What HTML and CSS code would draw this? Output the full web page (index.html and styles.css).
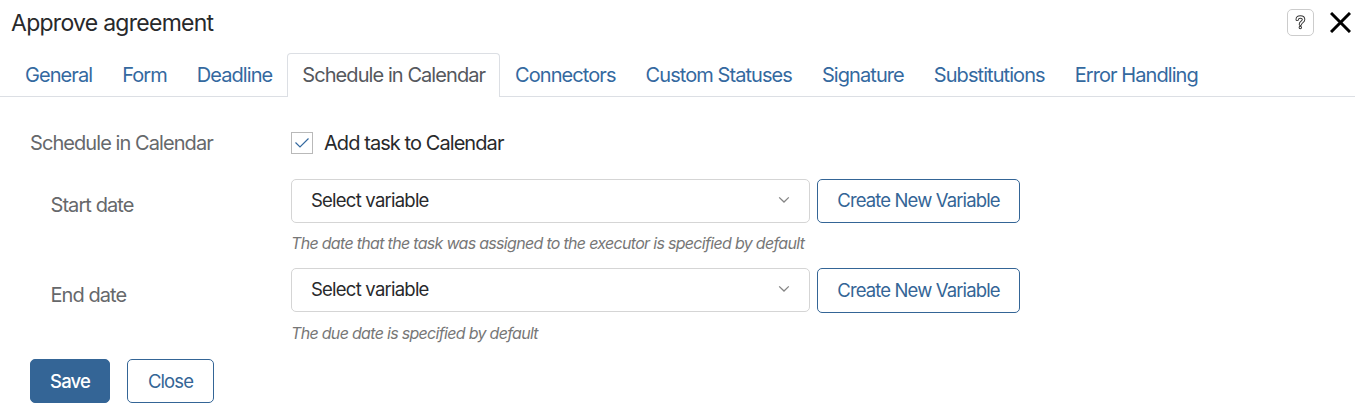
FILE: index.html
```html
<!DOCTYPE html>
<html lang="en">
<head>
<meta charset="utf-8">
<title>Approve agreement</title>
<link rel="stylesheet" href="styles.css">
</head>
<body>
<header class="header">
  <h1 class="title">Approve agreement</h1>
  <div class="header-actions">
    <button class="help" aria-label="Help">
      <svg width="11" height="15" viewBox="0 0 11 15" fill="none" stroke-linecap="round" stroke-linejoin="round"><path class="help-outline" d="M2.2 4.4C2.2 2.6 3.6 2 5.3 2C7.2 2 8.6 2.9 8.6 4.6C8.6 6.9 5.4 6.7 5.4 9.2M5.3 12.4V12.5"/><path class="help-core" d="M2.2 4.4C2.2 2.6 3.6 2 5.3 2C7.2 2 8.6 2.9 8.6 4.6C8.6 6.9 5.4 6.7 5.4 9.2M5.3 12.4V12.5"/></svg>
    </button>
    <button class="dismiss" aria-label="Close window">
      <svg width="21" height="21" viewBox="0 0 21 21" fill="none" stroke="#000" stroke-width="3"><path d="M1 1L20 20M20 1L1 20"/></svg>
    </button>
  </div>
</header>
<nav class="tabs">
  <a class="tab">General</a>
  <a class="tab">Form</a>
  <a class="tab">Deadline</a>
  <a class="tab tab-active">Schedule in Calendar</a>
  <a class="tab">Connectors</a>
  <a class="tab">Custom Statuses</a>
  <a class="tab">Signature</a>
  <a class="tab">Substitutions</a>
  <a class="tab">Error Handling</a>
</nav>
<main class="form">
  <div class="row row-check">
    <span class="label">Schedule in Calendar</span>
    <span class="check"><svg class="box" width="22" height="22" viewBox="0 0 22 22" fill="none"><rect x=".5" y=".5" width="21" height="21" stroke="#b9b9b9"/><path d="M4.500 10.500L9 15L17.500 6.500" stroke="#34699f" stroke-width="1.200"/></svg><span class="check-text">Add task to Calendar</span></span>
  </div>
  <div class="row row-start">
    <span class="label label-sub">Start date</span>
    <div class="field">
      <div class="controls">
        <div class="select"><span>Select variable</span><svg width="12" height="8" viewBox="0 0 12 8" fill="none" stroke="#858585" stroke-width="1.300"><path d="M1.200 1.400L6 6L10.800 1.400"/></svg></div>
        <button class="btn btn-create">Create New Variable</button>
      </div>
      <p class="hint">The date that the task was assigned to the executor is specified by default</p>
    </div>
  </div>
  <div class="row row-end">
    <span class="label label-sub">End date</span>
    <div class="field">
      <div class="controls">
        <div class="select"><span>Select variable</span><svg width="12" height="8" viewBox="0 0 12 8" fill="none" stroke="#858585" stroke-width="1.300"><path d="M1.200 1.400L6 6L10.800 1.400"/></svg></div>
        <button class="btn btn-create">Create New Variable</button>
      </div>
      <p class="hint">The due date is specified by default</p>
    </div>
  </div>
  <footer class="footer">
    <button class="btn btn-save">Save</button>
    <button class="btn btn-close">Close</button>
  </footer>
</main>
</body>
</html>
```
FILE: styles.css
```css
* { box-sizing: border-box; }
body { margin: 0; height: 410px; overflow: hidden; background: #fff; color: #28292b; font-family: Inter, "Liberation Sans", sans-serif; font-size: 20px; letter-spacing: -0.93px; }
button { font: inherit; letter-spacing: inherit; margin: 0; padding: 0; background: none; border: 0; white-space: nowrap; }
svg { display: block; flex: none; }
.header { height: 53px; display: flex; justify-content: space-between; padding: 9px 4px 0 11px; }
.title { margin: 0; font-size: 23px; font-weight: 400; line-height: 28px; letter-spacing: -0.73px; }
.header-actions { display: flex; gap: 16px; }
.help { width: 27px; height: 27px; border: 1px solid #ccc; border-radius: 5px; display: flex; align-items: center; justify-content: center; }
.help-outline { stroke: #333; stroke-width: 3.4; }
.help-core { stroke: #fff; stroke-width: 1.5; }
.dismiss { padding-top: 3px; height: 27px; display: flex; }
.tabs { height: 44px; display: flex; padding-left: 10px; border-bottom: 1px solid #dcdfe4; }
.tab { height: 44px; padding: 0 14px; border: 1px solid transparent; border-bottom: 0; line-height: 43px; white-space: nowrap; color: #34699f; }
.tab-active { color: #55585d; background: #fff; border-color: #dcdfe4; border-radius: 4px 4px 0 0; }
.form { padding: 35px 30px 0; }
.row { display: flex; }
.row-check { height: 47px; }
.row-start { height: 89px; }
.row-end { height: 91px; }
.label { width: 261px; flex: none; line-height: 22px; color: #66686b; }
.label-sub { padding: 15px 0 0 20.5px; }
.row-end .label-sub { padding-top: 16px; }
.check { display: flex; gap: 11px; line-height: 22px; }
.controls { display: flex; gap: 7px; }
.select { width: 519px; height: 44px; display: flex; align-items: center; justify-content: space-between; padding: 0 19px 2px; border: 1px solid #d5d5d5; border-radius: 5px; font-size: 18.5px; letter-spacing: -0.77px; }
.select svg { margin-top: -1px; }
.btn { height: 44px; border: 1px solid #346596; border-radius: 5px; color: #346596; font-size: 18.5px; letter-spacing: -0.88px; }
.btn-create { width: 203px; padding-bottom: 2px; }
.row-end .btn-create { height: 45px; padding-bottom: 1px; }
.hint { margin: 9px 0 0; font-size: 16px; line-height: 22px; letter-spacing: -0.69px; font-style: italic; color: #777; white-space: nowrap; }
.footer { display: flex; gap: 17px; }
.btn-save { width: 80px; background: #346596; color: #fff; font-weight: 500; }
.btn-close { width: 87px; }
```
